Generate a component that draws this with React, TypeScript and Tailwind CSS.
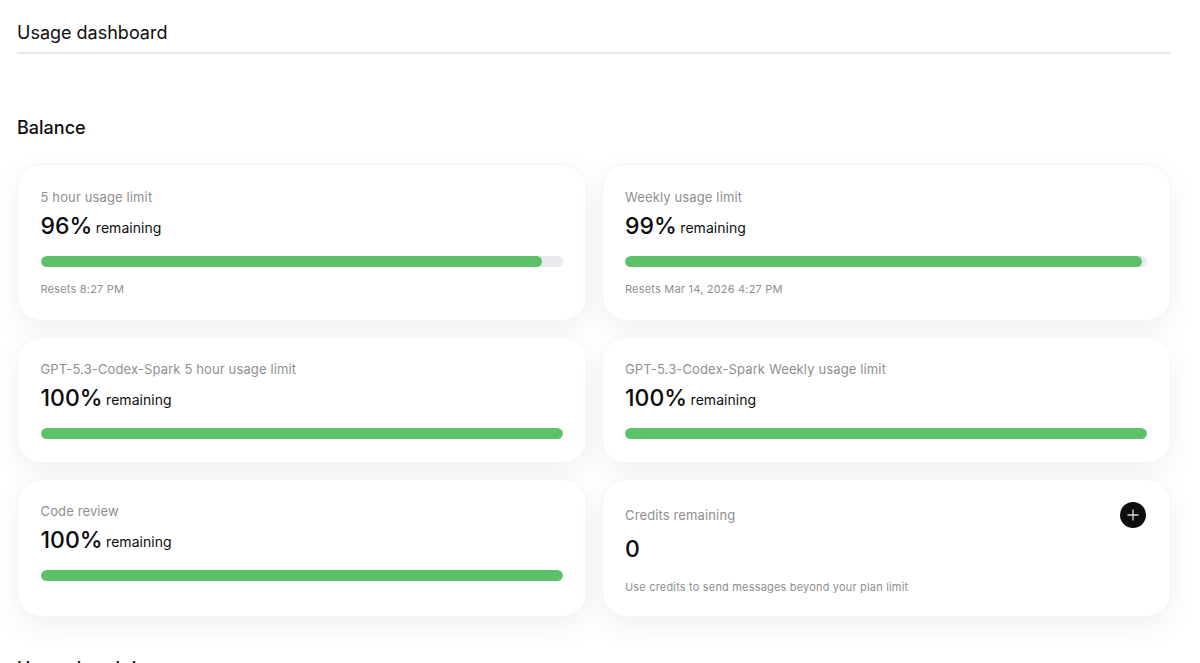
const FONT = "font-['Inter',sans-serif]"

function Bar({ value }: { value: number }) {
  return (
    <div className="h-[11px] w-full rounded-full bg-[#e9e9ee] overflow-hidden">
      <div className="h-full rounded-full bg-[#5cc169]" style={{ width: `${value}%` }} />
    </div>
  )
}

function UsageCard({
  label,
  percent,
  resets,
  className,
}: {
  label: string
  percent: number
  resets?: string
  className: string
}) {
  return (
    <div
      className={`rounded-[24px] border border-[#f5f5f5] bg-white pl-[22.5px] pr-[23px] shadow-[0_10px_30px_rgba(0,0,0,0.06)] ${className}`}
    >
      <div className="text-[13px] leading-[18px] tracking-[0.13px] text-[#8f8f8f]">{label}</div>
      <div className="mt-[5px] flex items-baseline gap-[3.5px] text-[#0d0d0d] leading-[30px]">
        <span className="text-[23px] font-medium">{percent}%</span>
        <span className="text-[14px] tracking-[0.03px] relative -top-px">remaining</span>
      </div>
      <div className="mt-[12px]">
        <Bar value={percent} />
      </div>
      {resets && <div className="mt-[14px] text-[11px] leading-[16px] tracking-[0.2px] text-[#8f8f8f]">{resets}</div>}
    </div>
  )
}

export default function App() {
  return (
    <div className={`${FONT} h-[663px] overflow-hidden bg-white pl-[17px] pr-[29px]`}>
      <div className="flex h-[54px] items-end border-b-2 border-[#e8e8e8] pb-[7px]">
        <h1 className="text-[18px] leading-[24px] font-normal text-[#0d0d0d]">Usage dashboard</h1>
      </div>
      <h2 className="mt-[62px] text-[18px] leading-[24px] font-medium text-[#0d0d0d]">Balance</h2>
      <div className="mt-[24px] grid grid-cols-2 gap-x-[15px]">
        <UsageCard label="5 hour usage limit" percent={96} resets="Resets 8:27 PM" className="h-[157px] pt-[23px]" />
        <UsageCard label="Weekly usage limit" percent={99} resets="Resets Mar 14, 2026 4:27 PM" className="h-[157px] pt-[23px]" />
        <UsageCard label="GPT-5.3-Codex-Spark 5 hour usage limit" percent={100} className="mt-[16px] h-[126px] pt-[22px]" />
        <UsageCard label="GPT-5.3-Codex-Spark Weekly usage limit" percent={100} className="mt-[16px] h-[126px] pt-[22px]" />
        <UsageCard label="Code review" percent={100} className="mt-[16px] h-[138px] pt-[22px]" />
        <div className="mt-[16px] h-[138px] rounded-[24px] border border-[#f5f5f5] bg-white pl-[22.5px] pr-[24px] pt-[26px] shadow-[0_10px_30px_rgba(0,0,0,0.06)]">
          <div className="flex items-start justify-between">
            <div className="text-[13px] leading-[18px] tracking-[0.13px] text-[#8f8f8f]">Credits remaining</div>
            <div className="-mt-[4px] flex size-[26px] items-center justify-center rounded-full bg-[#0d0d0d]">
              <svg width="14" height="14" viewBox="0 0 14 14" fill="none" stroke="#d8d8d8" strokeWidth="1.3">
                <path d="M7 1.5v11M1.5 7h11" />
              </svg>
            </div>
          </div>
          <div className="mt-[6px] text-[23px] leading-[30px] font-medium text-[#0d0d0d]">0</div>
          <div className="mt-[15px] text-[11px] leading-[16px] tracking-[0.18px] text-[#8f8f8f]">
            Use credits to send messages beyond your plan limit
          </div>
        </div>
      </div>
      <h2 className="mt-[40px] text-[18px] leading-[24px] font-medium text-[#0d0d0d]">Usage breakdown</h2>
    </div>
  )
}
